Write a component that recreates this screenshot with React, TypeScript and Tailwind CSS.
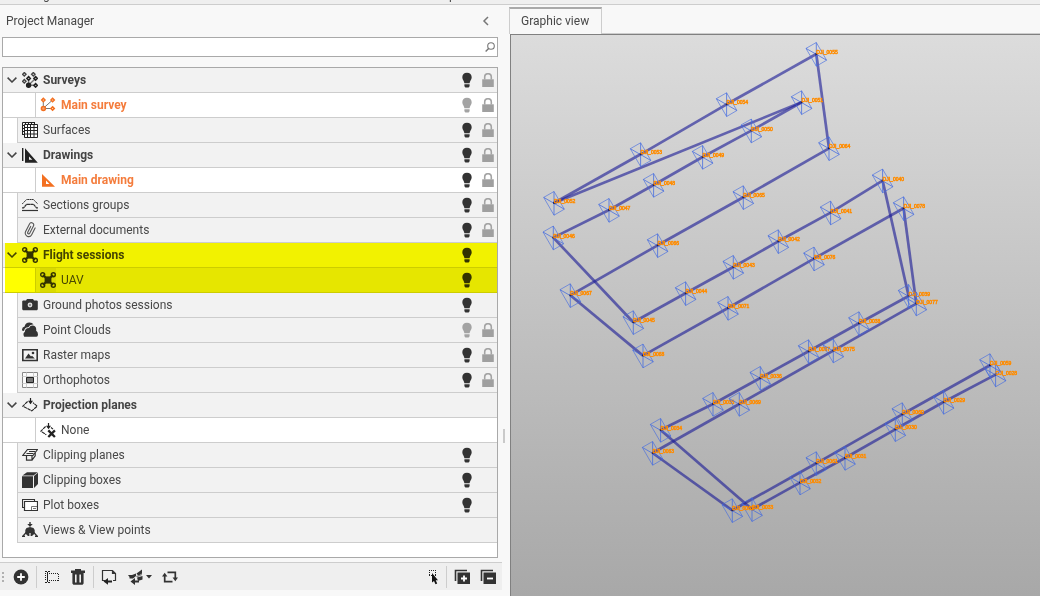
import { useState } from 'react';
import type { ReactNode } from 'react';
import { clsx } from 'clsx';

type IconName =
  | 'surveys' | 'survey' | 'surfaces' | 'drawings' | 'drawing' | 'sections' | 'clip' | 'drone'
  | 'camera' | 'cloud' | 'raster' | 'ortho' | 'projection' | 'none' | 'clipPlanes' | 'clipBoxes'
  | 'plot' | 'views';

interface TreeItem {
  label: string;
  icon: IconName;
  level: 1 | 2;
  group?: boolean;
  active?: boolean;
  selected?: boolean;
  visible?: boolean; // undefined hides the bulb
  lock?: boolean;
}

const BEFORE_FLIGHT: TreeItem[] = [
  { label: 'Surveys', icon: 'surveys', level: 1, group: true, visible: true, lock: true },
  { label: 'Main survey', icon: 'survey', level: 2, active: true, visible: false, lock: true },
  { label: 'Surfaces', icon: 'surfaces', level: 1, visible: true, lock: true },
  { label: 'Drawings', icon: 'drawings', level: 1, group: true, visible: true, lock: true },
  { label: 'Main drawing', icon: 'drawing', level: 2, active: true, visible: true, lock: true },
  { label: 'Sections groups', icon: 'sections', level: 1, visible: true, lock: true },
  { label: 'External documents', icon: 'clip', level: 1, visible: true, lock: true },
];

const FLIGHT: TreeItem[] = [
  { label: 'Flight sessions', icon: 'drone', level: 1, group: true, visible: true },
  { label: 'UAV', icon: 'drone', level: 2, selected: true, visible: true },
];

const AFTER_FLIGHT: TreeItem[] = [
  { label: 'Ground photos sessions', icon: 'camera', level: 1, visible: true },
  { label: 'Point Clouds', icon: 'cloud', level: 1, visible: false, lock: true },
  { label: 'Raster maps', icon: 'raster', level: 1, visible: true, lock: true },
  { label: 'Orthophotos', icon: 'ortho', level: 1, visible: true, lock: true },
  { label: 'Projection planes', icon: 'projection', level: 1, group: true },
  { label: 'None', icon: 'none', level: 2 },
  { label: 'Clipping planes', icon: 'clipPlanes', level: 1, visible: true },
  { label: 'Clipping boxes', icon: 'clipBoxes', level: 1, visible: true },
  { label: 'Plot boxes', icon: 'plot', level: 1, visible: true },
  { label: 'Views & View points', icon: 'views', level: 1 },
];

const ICONS: Record<IconName, ReactNode> = {
  surveys: (
    <g fill="none" stroke="#222" strokeWidth="1.4">
      <path d="M6.6 13V6.5M6.6 13l7-6.5M6.6 13.3h7" stroke="#777" />
      <path d="M2.3.6 4 2.3 2.3 4 .6 2.300ZM11.3.6 13 2.3 11.3 4 9.6 2.3ZM2.3 7.6 4 9.3 2.3 11 .6 9.3Z" stroke="#444" />
      <path d="m6.6 4.6 1.8 1.8-1.8 1.8-1.8-1.8ZM13.6 4.6l1.8 1.8-1.8 1.8-1.8-1.8ZM13.6 11.6l1.8 1.8-1.8 1.8-1.8-1.8Z" />
      <circle cx="6.6" cy="13.2" r="2" fill="#222" />
    </g>
  ),
  survey: (
    <g fill="none" stroke="#f37021" strokeWidth="1.5">
      <path d="M3.3 11.3V3M3.3 11.3 12.6 3M3.3 11.5h9" stroke="#777" strokeWidth="1" />
      <path d="M3.3 1.4 5 3 3.3 4.7 1.7 3ZM12.6 1.4 14.3 3l-1.7 1.7L11 3ZM12.6 9.7l1.7 1.7-1.7 1.7-1.7-1.7Z" fill="#fff" />
      <circle cx="3.4" cy="11.4" r="2" fill="#f5a070" />
    </g>
  ),
  surfaces: (
    <g fill="none" stroke="#222">
      <path d="M.5 13V.5H13M.5 3.5h2M.5 6.5h2M.5 9.5h2M.5 12.5h2M3.5.5v2M6.5.5v2M9.5.5v2M12.5.5v2" />
      <path d="M2.500 2.500h13v13h-13ZM5.500 2.500v13M8.500 2.500v13M12 2.500v13M2.500 5.500h13M2.500 8.500h13M2.500 12h13" fill="#fff" />
    </g>
  ),
  drawings: (
    <g fill="#222">
      <path d="M0 1h1.4v13H0ZM3 1.3l12.8 14.4H3ZM7 9.4v3.4h3.4Z" fillRule="evenodd" />
    </g>
  ),
  drawing: <path d="M2 2l13 12.8H2ZM6 8.6V12h3.4Z" fill="#f37021" fillRule="evenodd" />,
  sections: (
    <g fill="none" stroke="#333">
      <path d="M0 7.2 4.600 2.500h6.800L16 7.200" strokeDasharray="2 .4" />
      <path d="M0 10.800h1.600l3-3.500h6.800l3 3.500H16" strokeWidth="1.200" strokeDasharray="3 .3" />
      <path d="M0 13.5h16" strokeWidth="1.200" />
    </g>
  ),
  clip: (
    <path
      d="M11.600 3.800v7.600a3.400 3.400 0 0 1-6.800 0V2.800a2.200 2.200 0 0 1 4.400 0v8.200a1.100 1.100 0 0 1-2.200 0V4.500"
      transform="rotate(27 8 8)"
      fill="none"
      stroke="#555"
      strokeWidth="1.100"
      strokeLinecap="round"
    />
  ),
  drone: (
    <g fill="none" stroke="#333">
      <path d="m3 3 3 3M13 3l-3 3M3 13l3-3M13 13l-3-3" strokeWidth="1.8" />
      <path d="M4.6 4.4h6.8v7.2H4.6Z" fill="#333" stroke="none" />
      <circle cx="2.7" cy="2.7" r="2" strokeWidth="1.4" />
      <circle cx="13.3" cy="2.7" r="2" strokeWidth="1.4" />
      <circle cx="2.7" cy="13.3" r="2" strokeWidth="1.4" />
      <circle cx="13.3" cy="13.3" r="2" strokeWidth="1.4" />
    </g>
  ),
  camera: (
    <g>
      <path d="M1 3.500h3l1-1.500h6l1 1.500h3l.8.8v8l-.8 1H1l-.8-1v-8Z" fill="#333" />
      <circle cx="8" cy="8" r="2.400" fill="#ddd" />
      <circle cx="8" cy="8" r="1" fill="#777" />
    </g>
  ),
  cloud: (
    <g fill="#333">
      <path d="M0 8.500Q-.2 5 2.600 4.600 3.400.4 7.400.4q3 0 4.200 2.200Q8 2 6.400 5.200 2.600 5 2 9Z" />
      <path d="M2.200 14.800Q.4 11.400 2.900 9.800 2.900 6 7 6q1.600-3.200 5-2.200 2.600 1 2.200 5 1.800 1.200 1.800 3.800 0 2.200-1.600 2.200Z" />
    </g>
  ),
  raster: (
    <g>
      <path d="M.8 2.800h14.400v10.700H.8Z" fill="#f2f2f2" stroke="#333" strokeWidth="1.600" />
      <path d="M3 11.500 6.500 6.500 9 9.500l1-.8 2.800 2.800Z" fill="#333" />
      <circle cx="11" cy="6" r="1.300" fill="#333" />
    </g>
  ),
  ortho: (
    <g fill="none">
      <path d="M.5.5h15v15H.5Z" fill="#fafafa" stroke="#888" />
      <path d="M4.500.5v15M11.500.5v15M.5 4.500h15M.5 11.500h15" stroke="#ccc" />
      <path d="M4.500 5.500h7v5h-7Z" fill="#777" stroke="#222" />
    </g>
  ),
  projection: (
    <g fill="none" stroke="#222">
      <path d="M5.600 4.500.8 9.200l9 4.600 5.400-4.600-4.200-3.500" strokeWidth="1.100" strokeDasharray="3.500 .5" />
      <path d="M8.500 1v5.500" strokeWidth="1.200" />
      <path d="M6 3.800h5L8.500 7.200Z" fill="#222" stroke="none" />
    </g>
  ),
  none: (
    <g fill="none" stroke="#222">
      <path d="M5.600 4.500.8 9.200l5.500 3.600M11 5.500l2 1.700" strokeWidth="1.100" strokeDasharray="3.500 .5" />
      <path d="M8.500 1V6" strokeWidth="1.200" />
      <path d="M6 3.800h5L8.500 7.200Z" fill="#222" stroke="none" />
      <path d="m8.300 8.400 6.600 6.600M14.900 8.400 8.300 15" strokeWidth="2.300" />
    </g>
  ),
  clipPlanes: (
    <g fill="none" stroke="#333" strokeWidth="1.200">
      <path d="M5.500 2.500h10L11 8.500H.8Z" />
      <path d="M7 4.500h6.300M4.500 6.500h7M4.500 8.500v4.700h5.500V8.500M10 13.200l3.200-4.400V6" />
    </g>
  ),
  clipBoxes: (
    <g fill="#333">
      <path d="M0 4.200h11V16H0ZM.4 3.400 5 .2h10.800l-4.400 3.200ZM12 4l4-3.200V12l-4 4Z" />
    </g>
  ),
  plot: (
    <g fill="none" stroke="#333">
      <path d="M2 10.500H.5v-8h12V4" strokeWidth="1.100" />
      <path d="M2.500 4.500h13v9h-13Z" fill="#fff" strokeWidth="1.200" />
      <path d="M9.500 13v-3.500H15M11 11.500h3" stroke="#777" />
    </g>
  ),
  views: (
    <g fill="#333">
      <path d="M7.300 0h1.400v2h2L8 5 5.300 2h2ZM4.500 6 8 5l3.500 1 1.200 2v3.500L10 14H8.600v-3H7.400v3H6l-2.700-2.500V8Z" />
      <path d="m4.200 10.500-3.600 4M11.800 10.500l3.600 4M0 14.300h3M13 14.300h3" stroke="#333" strokeWidth="1.300" />
    </g>
  ),
};

function TreeIcon({ name }: { name: IconName }) {
  return (
    <svg viewBox="0 0 16 16" className="size-4 shrink-0" aria-hidden="true">
      {ICONS[name]}
    </svg>
  );
}

function Bulb({ on }: { on: boolean }) {
  return (
    <svg viewBox="0 0 10 16" className={clsx('h-4 w-2.5', on ? 'fill-[#333]' : 'fill-[#a3a3a3]')} aria-hidden="true">
      <path d="M5 .8C2 .8.3 2.800.3 5.200c0 2.600 1.900 3.600 2.100 6h5.200c.2-2.400 2.100-3.400 2.100-6C9.700 2.800 8 .8 5 .8ZM2.400 12.300h5.200v1.900l-1 1.200H3.400l-1-1.200Z" />
    </svg>
  );
}

function Lock() {
  return (
    <svg viewBox="0 0 12 14" className="h-3.5 w-3" aria-hidden="true">
      <path d="M2.700 6.500V4a3.300 3.300 0 0 1 6.600 0v2.500" fill="none" stroke="#a3a3a3" strokeWidth="1.600" />
      <path d="M.2 6.300h11.600V14H.2Z" fill="#9f9f9f" />
    </svg>
  );
}

function TreeRow({ item }: { item: TreeItem }) {
  const [visible, setVisible] = useState(item.visible);
  const nested = item.level === 2;

  return (
    <li className="flex h-[25px] items-stretch">
      {item.group ? (
        <button type="button" aria-label={`Collapse ${item.label}`} className="flex w-[18px] items-center justify-center border-b border-[#cdcdcd] bg-[#f2f2f2]">
          <svg viewBox="0 0 10 6" className="h-1.5 w-2.5" aria-hidden="true">
            <path d="M.6.6 5 5 9.400.6" fill="none" stroke="#444" strokeWidth="1.500" />
          </svg>
        </button>
      ) : (
        <span className={clsx('shrink-0 border-r border-[#cdcdcd] bg-white', nested ? 'w-[33px] border-b' : 'w-[15px]')} />
      )}
      <div
        className={clsx(
          'flex min-w-0 flex-1 items-center border-b border-[#cdcdcd]',
          item.selected ? 'bg-[#e6e6e6]' : nested ? 'bg-white' : 'bg-[#f2f2f2]',
          item.group ? 'pl-px' : 'pl-1',
        )}
      >
        <span className={clsx('flex h-full items-center', item.selected && 'bg-[#dadada]')}>
          <TreeIcon name={item.icon} />
        </span>
        <span
          className={clsx(
            'flex-1 truncate pl-[5px]',
            item.group && 'font-bold text-[#444]',
            item.active && 'font-bold text-[#f47c3c]',
          )}
        >
          {item.label}
        </span>
        <span className="flex w-6 justify-center">
          {visible !== undefined && (
            <button type="button" aria-label={`Show ${item.label}`} aria-pressed={visible} onClick={() => setVisible(!visible)}>
              <Bulb on={visible} />
            </button>
          )}
        </span>
        <span className="flex w-[18px] justify-center">
          {item.lock && (
            <button type="button" aria-label={`Lock ${item.label}`}>
              <Lock />
            </button>
          )}
        </span>
      </div>
    </li>
  );
}

function ToolButton({ label, children }: { label: string; children: ReactNode }) {
  return (
    <button type="button" aria-label={label} className="flex h-6 w-[26px] items-center justify-center">
      {children}
    </button>
  );
}

function Separator() {
  return (
    <span className="flex w-[5px] justify-center">
      <span className="h-[22px] w-px bg-[#cdcdcd]" />
    </span>
  );
}

function Toolbar() {
  return (
    <div role="toolbar" aria-label="Project tools" className="mt-1 mr-[7px] mb-1.5 flex h-7 items-center border-t border-[#cdcdcd] bg-[#efefef] pr-px">
      <svg viewBox="0 0 8 12" className="h-3 w-2" aria-hidden="true">
        <path d="M2 1h2v2H2ZM2 5h2v2H2ZM2 9h2v2H2Z" fill="#b0b0b0" />
      </svg>
      <ToolButton label="Add">
        <svg viewBox="0 0 16 16" className="size-4">
          <circle cx="8" cy="8" r="7.400" fill="#333" />
          <path d="M8 4.200v7.600M4.200 8h7.600" stroke="#fff" strokeWidth="1.800" />
        </svg>
      </ToolButton>
      <Separator />
      <ToolButton label="Rename">
        <svg viewBox="0 0 16 16" className="size-4" fill="none" stroke="#222">
          <path d="M1 2.500h2M4 2.500h2M3.500 3v10M1 13.500h2M4 13.500h2" />
          <path d="M1.500 4v8M5 4.500h10M14.500 5v7M5 11.500h10" strokeDasharray="1 1" />
        </svg>
      </ToolButton>
      <ToolButton label="Delete">
        <svg viewBox="0 0 16 16" className="size-4">
          <path d="M5 0h6v1.400h4V4H1V1.400h4ZM2.400 4h11.200v10.600l-1 1.200H3.400l-1-1.200Z" fill="#333" />
          <path d="M5.800 5.500v8M10.200 5.500v8" stroke="#efefef" strokeWidth="1.600" />
        </svg>
      </ToolButton>
      <Separator />
      <ToolButton label="Import">
        <svg viewBox="0 0 16 16" className="size-4" fill="none" stroke="#333" strokeWidth="1.200">
          <path d="M4 11.500H1.500v-10h10l3 3v7H12M11.500 1.500v3h3" />
          <path d="M2.500 12.500 7 9v2.400h4v2H7v2.400Z" fill="#222" stroke="none" />
        </svg>
      </ToolButton>
      <button type="button" aria-label="Import photos" className="flex h-6 w-[35px] items-center gap-0.5 pl-1.5">
        <svg viewBox="0 0 16 16" className="size-4" fill="#333">
          <path d="M8.500 4.500 14 .5v4L10.500 7ZM0 6h4l4-1.500V7L5 9.500H1.500V8ZM9 8.500 14.500 7v3.500L10 12Z" />
          <path d="m8 7 6-2v1L9 8.500Z" fill="#888" />
          <path d="M2.500 12.600 7 9v2.400h4v2.200H7v2.400Z" />
        </svg>
        <svg viewBox="0 0 6 4" className="h-1 w-1.5" fill="#333"><path d="M0 0h6L3 3.400Z" /></svg>
      </button>
      <ToolButton label="Refresh">
        <svg viewBox="0 0 16 16" className="size-4" fill="none" stroke="#333" strokeWidth="1.700">
          <path d="M5.500 3.300h7.800V10M10.500 12.700H2.700V6" />
          <path d="M10.600 8.600H16l-2.700 3.600ZM0 7.400h5.400L2.700 3.800Z" fill="#333" stroke="none" />
        </svg>
      </ToolButton>
      <span className="flex-1" />
      <ToolButton label="Select in view">
        <svg viewBox="0 0 16 16" className="size-4">
          <path d="M6 1.500h7M6 6.500h7M6.500 1v6M12.500 1v6" fill="none" stroke="#222" strokeDasharray="1 1" />
          <path d="M9 4v9.500l2-1.600 1.500 3.400 1.700-.8-1.500-3.200H15Z" fill="#111" />
        </svg>
      </ToolButton>
      <Separator />
      <ToolButton label="Expand all">
        <svg viewBox="0 0 16 16" className="size-4" fill="none">
          <path d="M1.500 12V1.500h11.500" stroke="#333" strokeWidth="1.600" />
          <path d="M3.500 3.500H16V15H3.500Z" fill="#333" />
          <path d="M10 6.500v6M7 9.500h6" stroke="#fff" strokeWidth="1.800" />
        </svg>
      </ToolButton>
      <ToolButton label="Collapse all">
        <svg viewBox="0 0 16 16" className="size-4" fill="none">
          <path d="M1.500 12V1.500h11.500" stroke="#333" strokeWidth="1.600" />
          <path d="M3.500 3.500H16V15H3.500Z" fill="#333" />
          <path d="M7 9.500h6" stroke="#fff" strokeWidth="1.800" />
        </svg>
      </ToolButton>
    </div>
  );
}

function ProjectManager() {
  const [query, setQuery] = useState('');

  return (
    <section aria-label="Project Manager" className="relative flex w-[509px] shrink-0 flex-col">
      <header className="flex h-8 items-center justify-between pr-[18px] pl-[6px]">
        <h1>Project Manager</h1>
        <button type="button" aria-label="Hide panel">
          <svg viewBox="0 0 10 10" className="size-2.5" aria-hidden="true">
            <path d="M7 1 3 5l4 4" fill="none" stroke="#777" strokeWidth="1.500" />
          </svg>
        </button>
      </header>

      <div className="mr-[11px] ml-[2px] flex h-5 items-center border border-[#a9a9a9] bg-white pr-[2px]">
        <input
          type="text"
          aria-label="Search"
          value={query}
          onChange={(e) => setQuery(e.target.value)}
          className="h-full min-w-0 flex-1 px-1 outline-none"
        />
        <svg viewBox="0 0 10 10" className="size-2.5" fill="none" stroke="#777" aria-hidden="true">
          <circle cx="6" cy="4" r="3.300" strokeWidth="1.100" />
          <path d="M3.600 6.400.6 9.400" strokeWidth="1.400" />
        </svg>
      </div>

      <div className="mt-2.5 mr-[11px] ml-[2px] flex-1 border border-[#a9a9a9] bg-white">
        <ul>
          {BEFORE_FLIGHT.map((item) => <TreeRow key={item.label} item={item} />)}
        </ul>
        <div className="relative">
          <ul>
            {FLIGHT.map((item) => <TreeRow key={item.label} item={item} />)}
          </ul>
          {/* marker highlight drawn over both rows */}
          <div className="pointer-events-none absolute inset-y-0 right-0 left-0.5 bg-[#ffff00] mix-blend-multiply" />
        </div>
        <ul>
          {AFTER_FLIGHT.map((item) => <TreeRow key={item.label} item={item} />)}
        </ul>
      </div>

      <Toolbar />

      {/* splitter grip on the panel's right edge */}
      <span className="absolute top-[424px] right-1 h-3.5 w-0.5 bg-[#cacaca]" />
    </section>
  );
}

interface Shot {
  x: number;
  y: number;
  id: string;
}

// photo positions in flight order
const SHOTS: Shot[] = [
  { x: 995.6, y: 374.6, id: '0028' },
  { x: 943.6, y: 402, id: '0029' },
  { x: 895.3, y: 429.3, id: '0030' },
  { x: 845, y: 458, id: '0031' },
  { x: 800, y: 482.6, id: '0032' },
  { x: 752, y: 509.3, id: '0033' },
  { x: 660.6, y: 430, id: '0034' },
  { x: 713, y: 404, id: '0035' },
  { x: 760.3, y: 378, id: '0036' },
  { x: 808.6, y: 351.3, id: '0037' },
  { x: 859, y: 323.3, id: '0038' },
  { x: 908.6, y: 296, id: '0039' },
  { x: 882.6, y: 180.6, id: '0040' },
  { x: 830.6, y: 212.6, id: '0041' },
  { x: 778.3, y: 241.3, id: '0042' },
  { x: 733.3, y: 267, id: '0043' },
  { x: 685.6, y: 293.3, id: '0044' },
  { x: 633.3, y: 322.3, id: '0045' },
  { x: 553.3, y: 237.6, id: '0046' },
  { x: 609, y: 210, id: '0047' },
  { x: 653.6, y: 185, id: '0048' },
  { x: 702.6, y: 157, id: '0049' },
  { x: 751.3, y: 130.6, id: '0050' },
  { x: 801.6, y: 102.3, id: '0051' },
  { x: 554, y: 203, id: '0052' },
  { x: 640.6, y: 154.3, id: '0053' },
  { x: 726.6, y: 104.3, id: '0054' },
  { x: 816.3, y: 54, id: '0055' },
  { x: 829, y: 148.3, id: '0064' },
  { x: 743.3, y: 197.3, id: '0065' },
  { x: 657.6, y: 245.3, id: '0066' },
  { x: 570.3, y: 295.3, id: '0067' },
  { x: 643, y: 355.6, id: '0068' },
  { x: 728, y: 308, id: '0071' },
  { x: 814, y: 258.6, id: '0076' },
  { x: 903.6, y: 208.3, id: '0078' },
  { x: 916.3, y: 303.6, id: '0077' },
  { x: 833.3, y: 350.6, id: '0075' },
  { x: 739.3, y: 404, id: '0069' },
  { x: 652.6, y: 453, id: '0063' },
  { x: 732.3, y: 510.3, id: '0062' },
  { x: 816.3, y: 463.3, id: '0061' },
  { x: 902.3, y: 414.3, id: '0060' },
  { x: 990, y: 365.3, id: '0059' },
];

function FlightCanvas() {
  return (
    <svg
      viewBox="511 35 529 561"
      preserveAspectRatio="xMinYMin meet"
      className="h-full w-full"
      role="img"
      aria-label="UAV flight path"
    >
      {SHOTS.slice(1).map((shot, i) => (
        <line
          key={shot.id}
          x1={SHOTS[i].x}
          y1={SHOTS[i].y}
          x2={shot.x}
          y2={shot.y}
          stroke="#1c1c96"
          strokeOpacity="0.62"
          strokeWidth="2.700"
        />
      ))}
      {SHOTS.map(({ x, y, id }) => (
        <g key={id} transform={`translate(${x} ${y})`}>
          <g fill="none" stroke="#4169e1" strokeWidth="0.900">
            <path d="M0-11.500-10.300-5.600 0 12.200 10.300 6.200Z" strokeOpacity="0.700" />
            <path d="M0-11.500V12.200M-10.300-5.600 10.300 6.200" strokeOpacity="0.850" />
          </g>
          <circle r="1" fill="#16164f" />
          <text x="0" y="0" fill="#ff8c00" stroke="#ff8c00" strokeWidth="0.500" className="font-['Liberation_Sans',sans-serif] text-[5px]">
            DJI_{id}
          </text>
        </g>
      ))}
    </svg>
  );
}

function GraphicView() {
  return (
    <section aria-label="Graphic view" className="flex min-w-0 flex-1 flex-col pt-[2px]">
      <div role="tablist" className="flex h-[27px] shrink-0">
        <button type="button" role="tab" aria-selected="true" className="border-x border-t-2 border-x-[#cdcdcd] border-t-[#a9a9a9] pr-3 pb-0.5 pl-[11px]">
          Graphic view
        </button>
        <span className="flex-1 border-b border-[#cdcdcd]" />
      </div>
      <div className="ml-px min-h-0 flex-1 border-t border-l border-[#808080] bg-linear-to-b from-[#dcdcdc] to-[#a8a8a8]">
        <FlightCanvas />
      </div>
    </section>
  );
}

export default function App() {
  return (
    <div className="flex h-screen flex-col overflow-hidden bg-[#f8f8f8] font-[Roboto,sans-serif] text-[12px] text-[#484848]">
      {/* lower edge of the menu strip */}
      <div className="flex h-[5px] shrink-0 items-end overflow-hidden border-b border-[#cdcdcd] bg-[#efefef] pb-px leading-4">
        <span className="w-[449px] pl-[43px]">g</span>
        <span>p</span>
      </div>
      <main className="flex min-h-0 flex-1">
        <ProjectManager />
        <GraphicView />
      </main>
    </div>
  );
}
